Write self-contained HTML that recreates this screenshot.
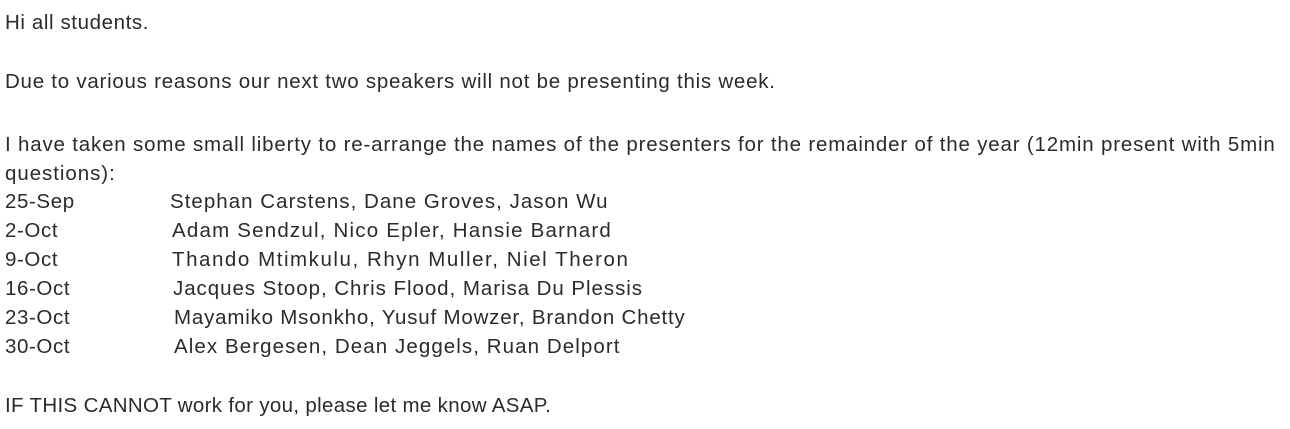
<!DOCTYPE html>
<html><head><meta charset="utf-8"><style>
body{margin:0;background:#fff;width:1290px;height:429px;overflow:hidden;position:relative;font-family:"Liberation Sans",Arial,sans-serif;font-size:20.5px;letter-spacing:0.6px;color:#2b2b2b;}
.l{position:absolute;left:5px;white-space:nowrap;line-height:20px;}
.n{position:absolute;white-space:nowrap;line-height:20px;}
</style></head><body>
<div class="l" style="top:13px">Hi all students.</div>
<div class="l" style="top:72px;letter-spacing:0.75px">Due to various reasons our next two speakers will not be presenting this week.</div>
<div class="l" style="top:135px;letter-spacing:0.82px">I have taken some small liberty to re-arrange the names of the presenters for the remainder of the year (12min present with 5min</div>
<div class="l" style="top:164px;letter-spacing:0.95px">questions):</div>
<div class="l" style="top:192px">25-Sep</div><div class="n" style="top:192px;left:170px;letter-spacing:1.03px">Stephan Carstens, Dane Groves, Jason Wu</div>
<div class="l" style="top:221px">2-Oct</div><div class="n" style="top:221px;left:172px;letter-spacing:1.2px">Adam Sendzul, Nico Epler, Hansie Barnard</div>
<div class="l" style="top:250px">9-Oct</div><div class="n" style="top:250px;left:172px;letter-spacing:1.55px">Thando Mtimkulu, Rhyn Muller, Niel Theron</div>
<div class="l" style="top:279px">16-Oct</div><div class="n" style="top:279px;left:173px;letter-spacing:0.95px">Jacques Stoop, Chris Flood, Marisa Du Plessis</div>
<div class="l" style="top:308px">23-Oct</div><div class="n" style="top:308px;left:174px;letter-spacing:0.8px">Mayamiko Msonkho, Yusuf Mowzer, Brandon Chetty</div>
<div class="l" style="top:337px">30-Oct</div><div class="n" style="top:337px;left:174px;letter-spacing:1.08px">Alex Bergesen, Dean Jeggels, Ruan Delport</div>
<div class="l" style="top:396px;letter-spacing:0.33px">IF THIS CANNOT work for you, please let me know ASAP.</div>
</body></html>
